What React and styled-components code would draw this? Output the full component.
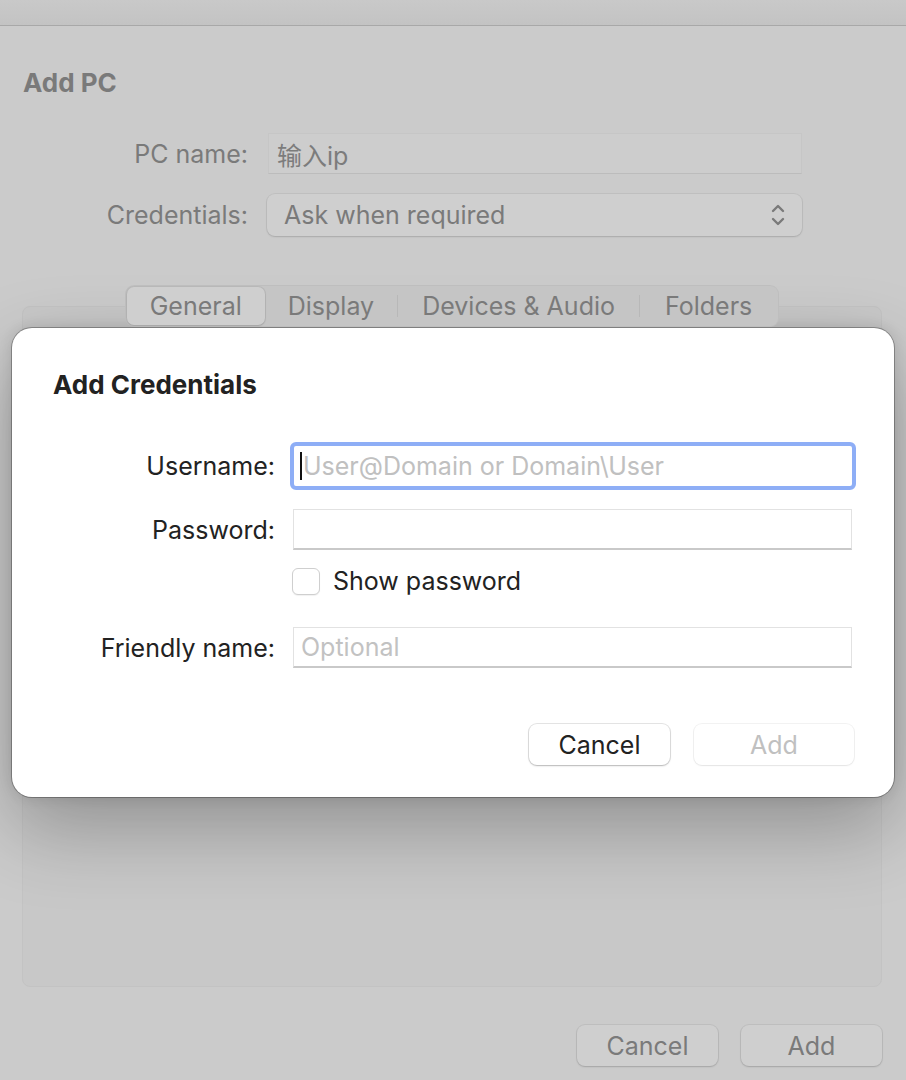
import React from "react";
import styled, { createGlobalStyle } from "styled-components";

const Global = createGlobalStyle`
  html, body { margin: 0; padding: 0; }
  body {
    background: #cbcbcb;
    font-family: Inter, "Noto Sans", "Noto Sans CJK SC", sans-serif;
    -webkit-font-smoothing: antialiased;
  }
  * { box-sizing: border-box; }
`;

const Page = styled.div`
  position: relative;
  width: 906px;
  height: 1080px;
  overflow: hidden;
  background: #cbcbcb;
  display: flex;
  flex-direction: column;
`;

const TitleBar = styled.div`
  height: 26px;
  flex: none;
  background: linear-gradient(#c9c9c9, #c3c3c3);
  border-bottom: 1px solid #a8a8a8;
`;

const Window = styled.div`
  flex: 1;
  display: flex;
  flex-direction: column;
  padding: 43px 24px 14px 22px;
`;

const WindowTitle = styled.h1`
  margin: 0 0 0 1px;
  font-size: 26px;
  font-weight: 700;
  color: #7a7a7a;
  line-height: 28px;
`;

const BgForm = styled.div`
  margin-top: 36px;
  display: grid;
  grid-template-columns: 226px 534px;
  column-gap: 20px;
  row-gap: 20px;
  align-items: center;
`;

const BgLabel = styled.div`
  text-align: right;
  font-size: 25px;
  color: #7a7a7a;
`;

const BgInput = styled.div`
  height: 41px;
  background: #cdcdcd;
  border: 1px solid #c6c6c6;
  border-bottom-color: #bcbcbc;
  padding: 0 8px;
  display: flex;
  align-items: center;
  font-size: 25px;
  color: #7c7c7c;
  font-family: Inter, "Noto Sans CJK SC", sans-serif;
`;

const BgSelect = styled.div`
  height: 42px;
  margin-left: -1px;
  background: #cfcfcf;
  border-radius: 8px;
  box-shadow: 0 0 0 1px rgba(0,0,0,0.05), 0 1px 2px rgba(0,0,0,0.12);
  padding: 0 16px 0 17px;
  display: flex;
  align-items: center;
  justify-content: space-between;
  font-size: 25px;
  color: #7a7a7a;
`;

const TabArea = styled.div`
  margin-top: 49px;
  position: relative;
  display: flex;
  flex-direction: column;
  align-items: center;
`;

const Segmented = styled.div`
  position: relative;
  z-index: 1;
  display: flex;
  align-items: center;
  height: 42px;
  padding: 2px;
  background: #c5c5c5;
  border-radius: 9px;
  box-shadow: inset 0 0 0 1px rgba(0,0,0,0.03);
`;

const Tab = styled.div`
  height: 38px;
  display: flex;
  align-items: center;
  padding: 0 ${p => p.$pad}px;
  font-size: 25px;
  color: #7a7a7a;
  border-radius: 7px;
  background: ${p => (p.$active ? "#cfcfcf" : "transparent")};
  box-shadow: ${p => (p.$active ? "0 0 0 1px rgba(0,0,0,0.06), 0 1px 2px rgba(0,0,0,0.12)" : "none")};
`;

const Sep = styled.div`
  width: 1px;
  height: 22px;
  background: #b8b8b8;
`;

const Panel = styled.div`
  margin-top: -21px;
  width: 860px;
  height: 681px;
  background: #c8c8c8;
  border: 1px solid #c3c3c3;
  border-radius: 8px;
  padding: 461px 0 0 247px;
`;

const BgCheckRow = styled.div`
  display: flex;
  align-items: center;
  gap: 12px;
  font-size: 25px;
  line-height: 30px;
  color: #7a7a7a;
`;

const BgCheck = styled.div`
  width: 26px;
  height: 26px;
  border-radius: 6px;
  background: #cfcfcf;
  border: 1px solid #b5b5b5;
`;

const Footer = styled.div`
  margin-top: auto;
  display: flex;
  justify-content: flex-end;
  gap: 23px;
`;

const BgButton = styled.div`
  width: 141px;
  height: 41px;
  border-radius: 8px;
  background: #cfcfcf;
  box-shadow: 0 0 0 1px rgba(0,0,0,0.06), 0 1px 2px rgba(0,0,0,0.14);
  display: flex;
  align-items: center;
  justify-content: center;
  font-size: 25px;
  color: #7a7a7a;
`;

/* ---- Sheet ---- */

const Sheet = styled.div`
  position: absolute;
  left: 12px;
  top: 328px;
  width: 882px;
  height: 469px;
  background: #ffffff;
  border-radius: 20px;
  box-shadow: 0 0 0 1px rgba(0,0,0,0.28), 0 0 14px rgba(0,0,0,0.12), 0 30px 80px rgba(0,0,0,0.28);
  padding: 43px 40px 0 41px;
  display: flex;
  flex-direction: column;
`;

const SheetTitle = styled.h2`
  margin: 0;
  font-size: 26px;
  font-weight: 700;
  color: #222;
  line-height: 28px;
`;

const Form = styled.div`
  margin-top: 43px;
  display: grid;
  grid-template-columns: 222px 559px;
  column-gap: 18px;
  align-items: center;
`;

const Label = styled.div`
  text-align: right;
  font-size: 25px;
  color: #222;
  white-space: nowrap;
  margin-top: ${p => p.$mt || 0}px;
`;

const Field = styled.div`
  height: 41px;
  margin-top: ${p => p.$mt || 0}px;
  border: 1px solid #e2e2e2;
  border-bottom: 2px solid #c9c9c9;
  background: #fff;
  padding: 0 7px;
  display: flex;
  align-items: center;
  font-size: 25px;
  color: #c2c2c2;
`;

const FocusField = styled.div`
  height: 48px;
  margin-left: -3px;
  margin-right: -4px;
  border: 4px solid #8eaef6;
  border-radius: 6px;
  background: #fff;
  padding: 0 6px;
  display: flex;
  align-items: center;
  font-size: 25px;
  color: #c0c0c0;
  white-space: nowrap;
`;

const Caret = styled.span`
  display: inline-block;
  width: 2px;
  height: 28px;
  background: #111;
  margin-right: 1px;
`;

const CheckRow = styled.label`
  grid-column: 2;
  margin-top: 16px;
  display: flex;
  align-items: center;
  gap: 13px;
  font-size: 25px;
  color: #222;
`;

const Check = styled.span`
  width: 28px;
  height: 27px;
  margin-left: -1px;
  border-radius: 6px;
  border: 1px solid #cfcfcf;
  background: #fff;
  box-shadow: 0 1px 1px rgba(0,0,0,0.06);
`;

const Actions = styled.div`
  margin-top: 56px;
  display: flex;
  justify-content: flex-end;
  gap: 24px;
`;

const Button = styled.div`
  width: ${p => p.$w}px;
  height: 41px;
  border-radius: 8px;
  background: #fff;
  box-shadow: 0 0 0 1px rgba(0,0,0,${p => (p.$disabled ? 0.05 : 0.1)}), 0 1px 2px rgba(0,0,0,${p => (p.$disabled ? 0.06 : 0.2)});
  display: flex;
  align-items: center;
  justify-content: center;
  font-size: 25px;
  color: ${p => (p.$disabled ? "#c0c0c0" : "#222")};
`;

const Chevrons = () => (
  <svg width="16" height="26" viewBox="0 0 16 26" fill="none" stroke="#7a7a7a" strokeWidth="2.4" strokeLinecap="round" strokeLinejoin="round">
    <path d="M3 9 L8 4 L13 9" />
    <path d="M3 17 L8 22 L13 17" />
  </svg>
);

export default function App() {
  return (
    <>
      <Global />
      <Page>
        <TitleBar />
        <Window>
          <WindowTitle>Add PC</WindowTitle>
          <BgForm>
            <BgLabel>PC name:</BgLabel>
            <BgInput>输入ip</BgInput>
            <BgLabel>Credentials:</BgLabel>
            <BgSelect>
              <span>Ask when required</span>
              <Chevrons />
            </BgSelect>
          </BgForm>
          <TabArea>
            <Segmented>
              <Tab $active $pad={23}>General</Tab>
              <Tab $pad={23}>Display</Tab>
              <Sep />
              <Tab $pad={24}>Devices &amp; Audio</Tab>
              <Sep />
              <Tab $pad={25}>Folders</Tab>
            </Segmented>
            <Panel>
              <BgCheckRow>
                <BgCheck />
                <span>Swap mouse buttons</span>
              </BgCheckRow>
            </Panel>
          </TabArea>
          <Footer>
            <BgButton>Cancel</BgButton>
            <BgButton>Add</BgButton>
          </Footer>
        </Window>

        <Sheet>
          <SheetTitle>Add Credentials</SheetTitle>
          <Form>
            <Label>Username:</Label>
            <FocusField>
              <Caret />
              User@Domain or Domain\User
            </FocusField>
            <Label $mt={19}>Password:</Label>
            <Field $mt={19} />
            <CheckRow>
              <Check />
              Show password
            </CheckRow>
            <Label $mt={31}>Friendly name:</Label>
            <Field $mt={31}>Optional</Field>
          </Form>
          <Actions>
            <Button $w={141}>Cancel</Button>
            <Button $w={160} $disabled>Add</Button>
          </Actions>
        </Sheet>
      </Page>
    </>
  );
}
